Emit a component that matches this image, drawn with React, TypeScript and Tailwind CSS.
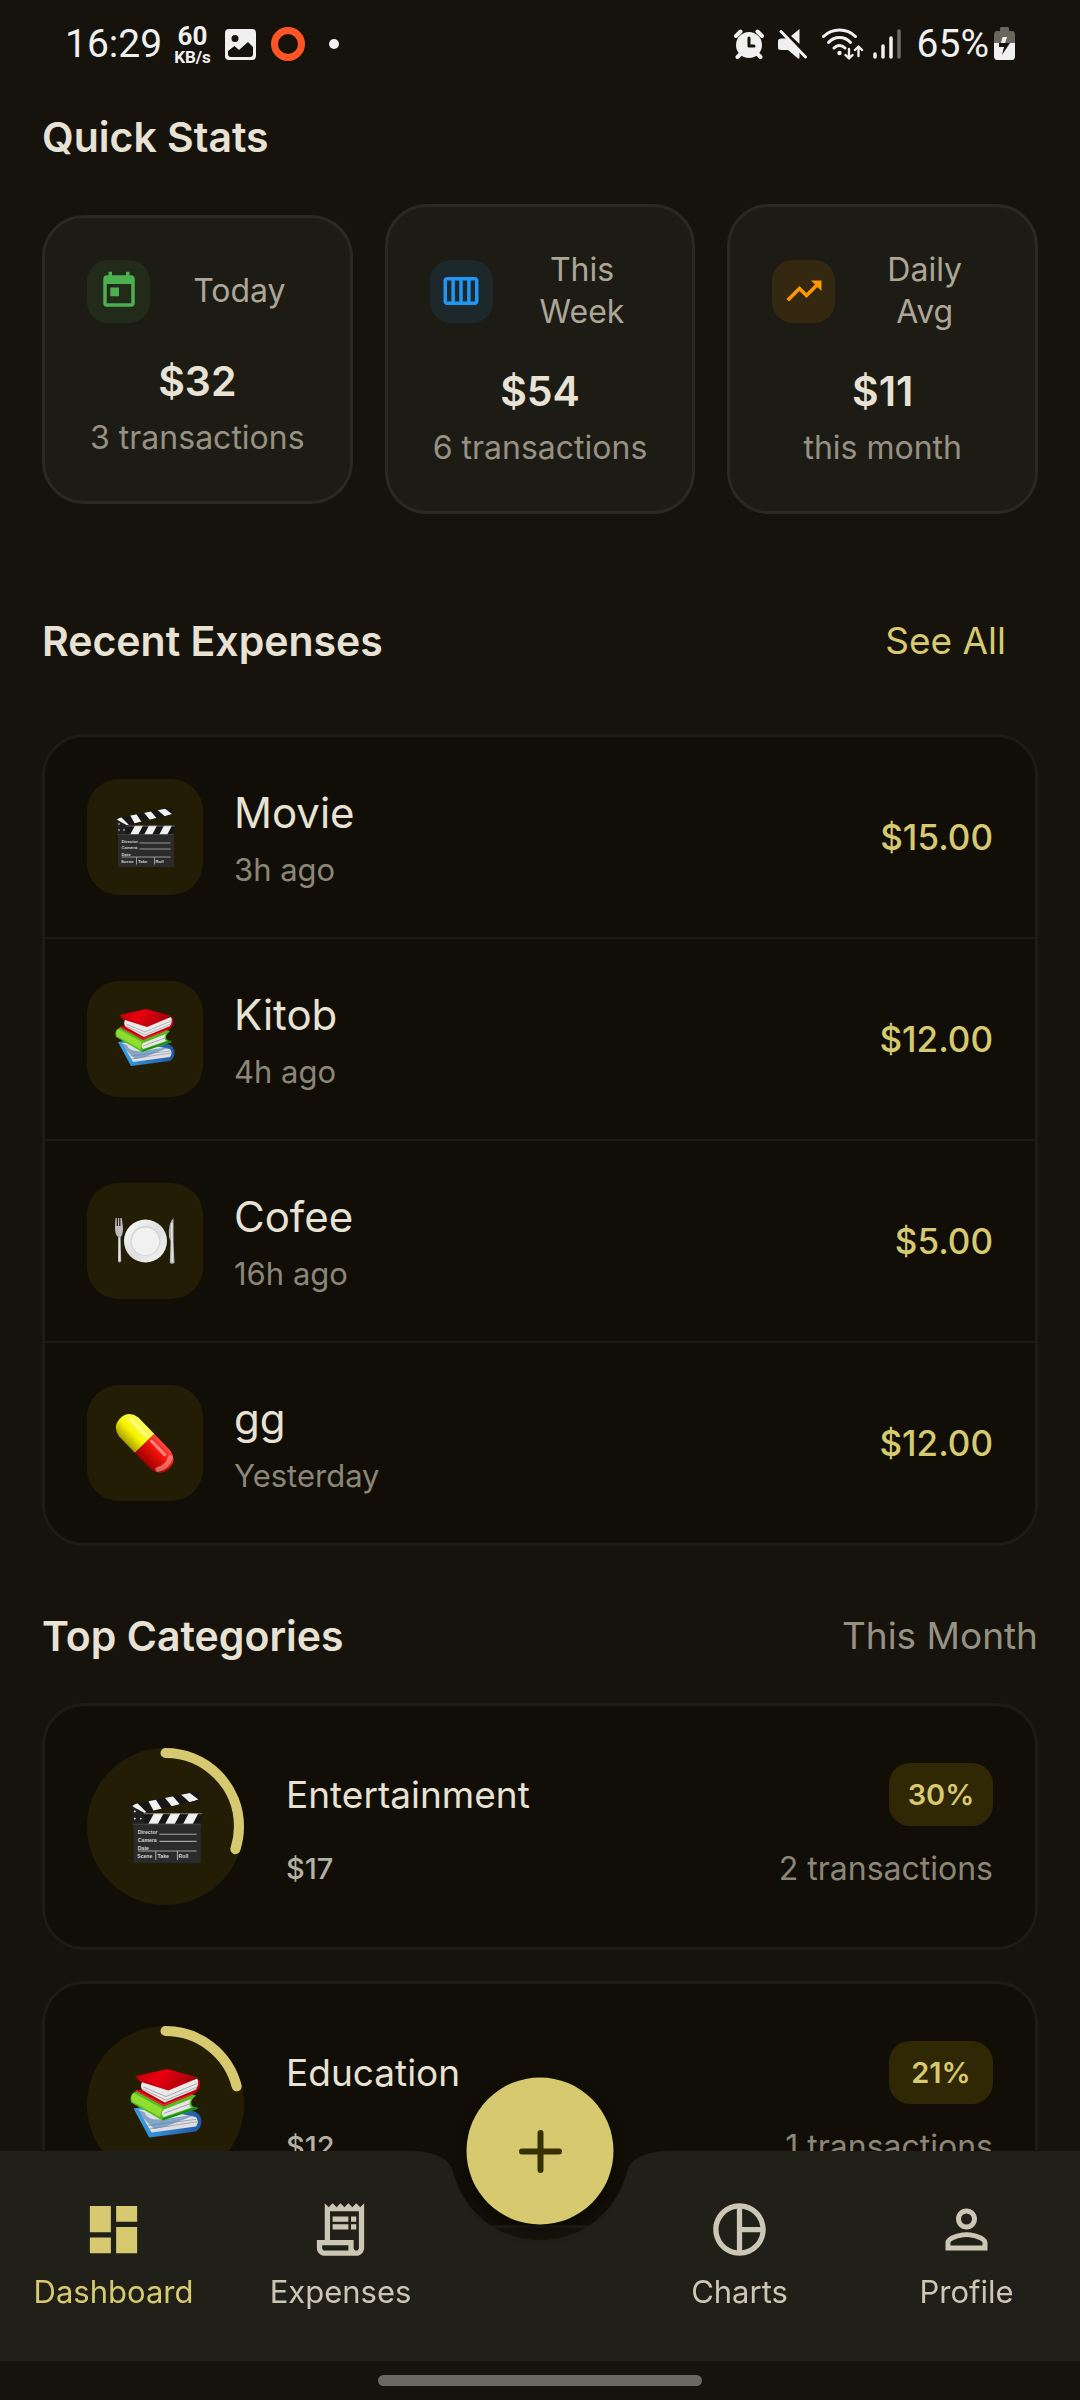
import type { ReactNode } from "react";
import { useId } from "react";
import type { IconType } from "react-icons";
import {
  MdCalendarViewWeek,
  MdDashboard,
  MdOutlineReceiptLong,
  MdPersonOutline,
  MdPieChartOutline,
  MdToday,
  MdTrendingUp,
} from "react-icons/md";

type EmojiProps = { className: string };

function Clapper({ className }: EmojiProps) {
  const id = useId();
  return (
    <svg viewBox="0 0 60 60" className={className} aria-hidden="true">
      <defs>
        <clipPath id={`${id}top`}>
          <path d="M0.5 11.5 56.5 0.5 58.5 7 10 18.500H2Z" />
        </clipPath>
        <clipPath id={`${id}bar`}>
          <path d="M9 18.5H60V27.500H1.5V12Z" />
        </clipPath>
      </defs>
      <path d="M3 27H59V59.5Q59 60 58 60H4Q3 60 3 59Z" fill="#2b2b2c" />
      <g clipPath={`url(#${id}top)`}>
        <rect width="60" height="20" fill="#171717" />
        <path d="M1 13 6 10 14 18 8 20ZM15 8 21 6.500 26.500 15 20 17ZM28.500 5 35 3.500 41.500 11 35 13ZM42 2.500 49 1 57 7 50 9.500Z" fill="#f1f1f1" />
      </g>
      <g clipPath={`url(#${id}bar)`}>
        <rect width="60" height="28" fill="#171717" />
        <path d="M20 18.5H28L23 28H15ZM34 18.5H42L37 28H29ZM49 18.5H57L52 28H44Z" fill="#f1f1f1" />
        <path d="M8 18.9H60" stroke="#9b9b9b" strokeWidth="0.8" />
      </g>
      <path d="M0.500 12 2 27H11.500V18Z" fill="#202020" />
      <g fill="#e5e5e5">
        <circle cx="4" cy="17" r="0.8" />
        <circle cx="4" cy="23" r="0.8" />
        <circle cx="9" cy="23" r="0.8" />
      </g>
      <path d="M2 27.6H59" stroke="#4a4a4a" strokeWidth="0.8" />
      <path d="M24.500 36H55.500M24.500 42H55.500M6.500 50H55.500M21.500 50V57.500M39.500 50V57.500" stroke="#a5a5a5" strokeWidth="0.9" />
      <g fill="#d4d4d4" fontSize="4.300" fontWeight="700" fontFamily="Liberation Sans, sans-serif">
        <text x="6.500" y="35.500">Director</text>
        <text x="6.500" y="42.200">Camera</text>
        <text x="6.500" y="48.800">Date</text>
        <text x="6" y="56">Scene</text>
        <text x="23" y="56">Take</text>
        <text x="40.500" y="56">Roll</text>
      </g>
    </svg>
  );
}

function Books({ className }: EmojiProps) {
  const id = useId();
  return (
    <svg viewBox="0 0 60 60" className={className} aria-hidden="true">
      <defs>
        <linearGradient id={`${id}r`} x1="0" y1="0" x2="1" y2="0.3">
          <stop offset="0" stopColor="#b80009" />
          <stop offset="0.45" stopColor="#ea0010" />
          <stop offset="1" stopColor="#a4000a" />
        </linearGradient>
        <linearGradient id={`${id}b`} x1="0" y1="0" x2="1" y2="0">
          <stop offset="0" stopColor="#3aa4e8" />
          <stop offset="1" stopColor="#2456a4" />
        </linearGradient>
      </defs>
      <path d="M3 33 16 57 55 52Q60 49 59.500 42 58 36 52 35L22 30Z" fill={`url(#${id}b)`} />
      <path d="M7 34 18 53 55 48Q58 44 55 40L25 34Z" fill="#dcdee2" />
      <path d="M16 50 56 44M15 47 55 42" stroke="#9a9da3" strokeWidth="0.700" />
      <path d="M3 33 12 36Q14 43 27 42L55 38 30 48 20 50Z" fill="#4a7fb8" opacity="0.600" />
      <path d="M4 19Q-1 22 1 28L27 43 57 33 52 31Q49 27 55 22L22 14Z" fill="#55bc1f" />
      <path d="M3 20Q0 23 2 27L25 40 27 33Z" fill="#8fdd2e" />
      <path d="M28 34 51 25Q48 29 51 32L28 40Q25 37 28 34Z" fill="#e6e6e8" />
      <path d="M28 37 50 29" stroke="#a0a0a0" strokeWidth="0.800" />
      <path d="M27 42 56 32" stroke="#118a1b" strokeWidth="1.800" />
      <path d="M5 7 10 12Q8 15 10 17L4 18 28 31 53 21Q60 17 58 9Z" fill="#c5000b" />
      <path d="M10 11 32 18 56 8Q58 12 55 17L29 28 11 18Q8 15 10 11Z" fill="#e9e9eb" />
      <path d="M11 15 30 23 56 12M11 17 30 26 56 15" fill="none" stroke="#a8a8aa" strokeWidth="0.800" />
      <path d="M4 6 31 0 57 7 30 17Z" fill={`url(#${id}r)`} />
      <path d="M5 18 28 30 52 21" fill="none" stroke="#e8323b" strokeWidth="1" />
    </svg>
  );
}

function Plate({ className }: EmojiProps) {
  const id = useId();
  return (
    <svg viewBox="0 0 60 60" className={className} aria-hidden="true">
      <defs>
        <linearGradient id={`${id}p`} x1="0" y1="0" x2="1" y2="1">
          <stop offset="0" stopColor="#ffffff" />
          <stop offset="0.500" stopColor="#dedede" />
          <stop offset="1" stopColor="#f6f6f6" />
        </linearGradient>
      </defs>
      <path d="M0.500 7H1.800V15H3V7H4.200V15H5.400V7H6.800L8 17Q8 24 5.600 26L6.200 50Q4.500 53 3 50L3.200 26Q0 24 0 17Z" fill="#bcbcc0" />
      <path d="M4.300 27V50" stroke="#f4f4f4" strokeWidth="0.900" />
      <circle cx="30.500" cy="30" r="21.500" fill={`url(#${id}p)`} />
      <circle cx="30.500" cy="30" r="15" fill="#d2d2d2" />
      <circle cx="30.500" cy="30.400" r="13.800" fill="#f1f1f2" />
      <path d="M58.500 7V30L59.500 52Q57 53.500 54.800 52L55.500 30 54 26Q53 12 58.500 7Z" fill="#b3b3b7" />
      <path d="M56.800 12 57.200 51" stroke="#f4f4f4" strokeWidth="1.200" />
    </svg>
  );
}

function Pill({ className }: EmojiProps) {
  const id = useId();
  return (
    <svg viewBox="0 0 60 60" className={className} aria-hidden="true">
      <defs>
        <linearGradient id={`${id}y`} x1="0" y1="0" x2="0" y2="1">
          <stop offset="0" stopColor="#fbfb5c" />
          <stop offset="0.550" stopColor="#f7f400" />
          <stop offset="1" stopColor="#a79d00" />
        </linearGradient>
        <linearGradient id={`${id}d`} x1="0" y1="0" x2="0" y2="1">
          <stop offset="0" stopColor="#ff4a42" />
          <stop offset="0.400" stopColor="#f01208" />
          <stop offset="1" stopColor="#9c0000" />
        </linearGradient>
      </defs>
      <g transform="rotate(46 30 30)">
        <path d="M30 17H7Q-5 19 -5 30.500T7 44H30Z" fill={`url(#${id}y)`} />
        <path d="M30 17H53Q65 19 65 30.500T53 44H30Z" fill={`url(#${id}d)`} />
        <path d="M33 24H52" stroke="#ffb0a8" strokeWidth="3" strokeLinecap="round" opacity="0.700" />
        <path d="M58 22Q63 30 58 39" stroke="#f0a09a" strokeWidth="5" strokeLinecap="round" fill="none" opacity="0.600" />
        <path d="M4 24H26" stroke="#ffffa8" strokeWidth="4" strokeLinecap="round" opacity="0.600" />
      </g>
    </svg>
  );
}

function StatusBar() {
  return (
    <header className="flex h-[88px] items-center justify-between pl-[65px] pr-[65px] font-['Roboto',sans-serif] text-[#f0f0f0]">
      <div className="flex items-center">
        <time className="text-[39px] leading-none">16:29</time>
        <div className="ml-3 flex flex-col items-center font-bold">
          <span className="text-[26px] leading-[26px]">60</span>
          <span className="text-[17px] leading-[17px]">KB/s</span>
        </div>
        <svg viewBox="0 0 31 31" className="ml-[14px] size-[31px]" aria-hidden="true">
          <path fill="currentColor" fillRule="evenodd" d="M4 0H27Q31 0 31 4V27Q31 31 27 31H4Q0 31 0 27V4Q0 0 4 0ZM10 6A3.500 3.500 0 1 0 10 13A3.500 3.500 0 1 0 10 6ZM3 22V25Q3 28 6 28H25Q28 28 28 25V18L23 13 14 21 9.500 17Z" />
        </svg>
        <svg viewBox="0 0 34 34" className="ml-[15px] size-[34px]" aria-hidden="true">
          <circle cx="17" cy="17" r="13.500" fill="none" stroke="#ff5526" strokeWidth="7" />
        </svg>
        <span className="ml-6 size-[10px] rounded-full bg-[#f0f0f0]" />
      </div>
      <div className="flex items-center">
        <svg viewBox="0 0 30 30" className="size-[30px]" aria-hidden="true">
          <circle cx="15" cy="16" r="13" fill="currentColor" />
          <path d="M2 7 6.500 2.500M28 7 23.500 2.500M3.500 28 7 24.500M26.500 28 23 24.500" stroke="currentColor" strokeWidth="4" strokeLinecap="round" />
          <path d="M15 9V17H20" stroke="#16130c" strokeWidth="3" strokeLinecap="round" strokeLinejoin="round" fill="none" />
        </svg>
        <svg viewBox="0 0 30 30" className="ml-[14px] size-[30px]" aria-hidden="true">
          <path d="M0 12Q0 9.500 3 9.500H9L21.500 21V29.500H20L10 21H3Q0 21 0 18.500ZM13 7 21.500 0V15Z" fill="currentColor" />
          <path d="M3 2.500 27.500 28" stroke="currentColor" strokeWidth="3" strokeLinecap="round" />
        </svg>
        <svg viewBox="0 0 42 32" className="ml-[14px] h-8 w-[42px]" fill="none" stroke="currentColor" strokeLinecap="round" aria-hidden="true">
          <path d="M1.500 8.500Q8 2 17.500 2T33.500 8.500M6.500 14.500Q11 9.500 17.500 9.500T28.500 14.500M12 20Q14.500 17.500 17.500 17.500T23 20" strokeWidth="3" />
          <circle cx="17.500" cy="25" r="2.200" fill="currentColor" stroke="none" />
          <path d="M27 21V30M23.500 27 27 30.500 30.500 27M36.500 28V19M33 22 36.500 18.500 40 22" strokeWidth="2.400" strokeLinejoin="round" />
        </svg>
        <svg viewBox="0 0 28 30" className="ml-[9px] h-[30px] w-7" fill="none" stroke="currentColor" strokeWidth="3.500" strokeLinecap="round" aria-hidden="true">
          <path d="M2 25V28M10 17V28M18 9V28" />
          <path d="M26 2V28" opacity="0.400" />
        </svg>
        <span className="ml-4 text-[39px] leading-none">65%</span>
        <svg viewBox="0 0 21 34" className="ml-[5px] h-[34px] w-[21px]" aria-hidden="true">
          <path d="M7 0H14Q15 0 15 2V4H18Q21 4 21 8V16H0V8Q0 4 3 4H6V2Q6 0 7 0Z" fill="#68665f" />
          <path d="M0 16H21V29Q21 33 18 33H3Q0 33 0 29Z" fill="currentColor" />
          <path d="M8.500 10H13L11 16H7Z" fill="#f0f0f0" />
          <path d="M5 16H16L8 28 10 20H5Z" fill="#16130c" />
        </svg>
      </div>
    </header>
  );
}

type Stat = { label: string; value: string; note: string; Icon: IconType; tone: string };

const stats: Stat[] = [
  { label: "Today", value: "$32", note: "3 transactions", Icon: MdToday, tone: "bg-[#4caf50]/10 text-[#4caf50]" },
  { label: "This Week", value: "$54", note: "6 transactions", Icon: MdCalendarViewWeek, tone: "bg-[#2196f3]/10 text-[#2196f3]" },
  { label: "Daily Avg", value: "$11", note: "this month", Icon: MdTrendingUp, tone: "bg-[#ff9800]/10 text-[#ff9800]" },
];

function StatCard({ label, value, note, Icon, tone }: Stat) {
  return (
    <article className="flex min-w-0 flex-1 flex-col items-center rounded-[42px] border-[3px] border-[#2a2821] bg-[#1d1c14] py-[42px] text-center">
      <div className="flex w-full items-center gap-[21px] px-[42px]">
        <span className={`flex size-[63px] shrink-0 items-center justify-center rounded-[21px] ${tone}`}>
          <Icon className="size-[42px]" aria-hidden="true" />
        </span>
        <h3 className="flex-1 text-[32px] leading-[42px] text-[#aca698]">{label}</h3>
      </div>
      <p className="mt-8 text-[41px] font-semibold leading-[52px]">{value}</p>
      <p className="mt-2.5 whitespace-nowrap text-[32px] leading-[42px] text-[#969182]">{note}</p>
    </article>
  );
}

const expenses = [
  { title: "Movie", when: "3h ago", amount: "$15.00", Emoji: Clapper },
  { title: "Kitob", when: "4h ago", amount: "$12.00", Emoji: Books },
  { title: "Cofee", when: "16h ago", amount: "$5.00", Emoji: Plate },
  { title: "gg", when: "Yesterday", amount: "$12.00", Emoji: Pill },
];

const categories = [
  { name: "Entertainment", total: "$17", percent: 30, count: "2 transactions", Emoji: Clapper },
  { name: "Education", total: "$12", percent: 21, count: "1 transactions", Emoji: Books },
];

function CategoryRing({ percent, children }: { percent: number; children: ReactNode }) {
  return (
    <div className="relative flex size-[157px] shrink-0 items-center justify-center rounded-full bg-[#231d05]">
      <svg viewBox="0 0 156 156" className="absolute inset-0 size-full -rotate-90" aria-hidden="true">
        <circle
          cx="78"
          cy="78"
          r="73"
          fill="none"
          stroke="#d6c970"
          strokeWidth="10"
          strokeLinecap="round"
          pathLength={100}
          strokeDasharray={`${percent} 100`}
        />
      </svg>
      {children}
    </div>
  );
}

function SectionTitle({ children }: { children: ReactNode }) {
  return <h2 className="text-[41px] font-semibold leading-[60px]">{children}</h2>;
}

function NavItem({ label, Icon, active = false }: { label: string; Icon: IconType; active?: boolean }) {
  return (
    <a
      href={`#${label.toLowerCase()}`}
      aria-current={active ? "page" : undefined}
      className={`flex flex-1 flex-col items-center gap-2.5 pt-[47px] ${active ? "text-[#d6c970]" : "text-[#ccc6b5]"}`}
    >
      <Icon className="size-[63px]" aria-hidden="true" />
      <span className="text-[31px] leading-[42px]">{label}</span>
    </a>
  );
}

function BottomNav() {
  return (
    <footer className="fixed inset-x-0 bottom-0">
      <nav className="relative flex h-[210px]">
        <div className="absolute inset-0 flex" aria-hidden="true">
          <div className="flex-1 bg-[#212018]" />
          <svg viewBox="0 0 264 210" className="h-[210px] w-[264px] shrink-0">
            <path d="M0 0Q40 0 45.300 21.200A89.250 89.250 0 0 0 218.700 21.200Q224 0 264 0V210H0Z" fill="#212018" />
          </svg>
          <div className="flex-1 bg-[#212018]" />
        </div>
        <div className="relative flex w-full">
          <NavItem label="Dashboard" Icon={MdDashboard} active />
          <NavItem label="Expenses" Icon={MdOutlineReceiptLong} />
          <div className="w-[172px] shrink-0" />
          <NavItem label="Charts" Icon={MdPieChartOutline} />
          <NavItem label="Profile" Icon={MdPersonOutline} />
        </div>
        <button
          type="button"
          aria-label="Add expense"
          className="absolute left-1/2 top-0 flex size-[147px] -translate-x-1/2 -translate-y-1/2 items-center justify-center rounded-full bg-[#d6c970] shadow-[0_6px_14px_rgba(0,0,0,0.45)]"
        >
          <svg viewBox="0 0 44 44" className="size-11" aria-hidden="true">
            <path d="M22 3.500V40.500M3.500 22H40.500" stroke="#363100" strokeWidth="6" strokeLinecap="round" />
          </svg>
        </button>
      </nav>
      <div className="flex h-[39px] items-center justify-center bg-[#16130c]">
        <span className="h-[11px] w-[324px] rounded-full bg-[#6a6862]" />
      </div>
    </footer>
  );
}

export default function App() {
  return (
    <div className="min-h-screen bg-[#16130c] font-['Inter',sans-serif] text-[#e8e2d4]">
      <StatusBar />
      <main className="px-[42px] pt-[19px]">
        <section>
          <SectionTitle>Quick Stats</SectionTitle>
          <div className="mt-[37px] flex items-center gap-8">
            {stats.map((stat) => (
              <StatCard key={stat.label} {...stat} />
            ))}
          </div>
        </section>

        <section className="mt-[97px]">
          <div className="flex items-center justify-between">
            <SectionTitle>Recent Expenses</SectionTitle>
            <a href="#expenses" className="pr-8 text-[37px] leading-[60px] text-[#d6c970]">
              See All
            </a>
          </div>
          <ul className="mt-[63px] divide-y-2 divide-[#1d1b15] overflow-hidden rounded-[42px] border-[3px] border-[#1d1b15] bg-[#110e07]">
            {expenses.map(({ title, when, amount, Emoji }) => (
              <li key={title} className="flex items-center gap-[31px] p-[42px]">
                <span className="flex size-[116px] shrink-0 items-center justify-center rounded-[32px] bg-[#231d05]">
                  <Emoji className="size-[60px]" />
                </span>
                <div className="flex-1">
                  <h3 className="text-[42px] leading-[60px]">{title}</h3>
                  <p className="mt-1.5 text-[31px] leading-[42px] text-[#8b8678]">{when}</p>
                </div>
                <span className="text-[35px] font-medium text-[#d6c970]">{amount}</span>
              </li>
            ))}
          </ul>
        </section>

        <section className="mt-[60px]">
          <div className="flex items-center justify-between">
            <SectionTitle>Top Categories</SectionTitle>
            <span className="text-[37px] leading-[60px] text-[#969182]">This Month</span>
          </div>
          <ul className="mt-[37px] flex flex-col gap-[31px]">
            {categories.map(({ name, total, percent, count, Emoji }) => (
              <li key={name} className="flex items-center gap-[42px] rounded-[42px] border-[3px] border-[#1d1b15] bg-[#110e07] p-[42px]">
                <CategoryRing percent={percent}>
                  <Emoji className="size-[72px]" />
                </CategoryRing>
                <div className="flex flex-1 flex-col gap-[22px]">
                  <div className="flex items-center justify-between">
                    <h3 className="text-[37px] leading-[48px]">{name}</h3>
                    <span className="w-[104px] rounded-[21px] bg-[#302705] text-center text-[29px] font-semibold leading-[63px] text-[#d6c970]">
                      {percent}%
                    </span>
                  </div>
                  <div className="flex items-center justify-between leading-[42px]">
                    <span className="text-[29px] font-medium text-[#b5b0a1]">{total}</span>
                    <span className="text-[32px] text-[#8b8678]">{count}</span>
                  </div>
                </div>
              </li>
            ))}
          </ul>
        </section>
      </main>
      <BottomNav />
    </div>
  );
}
